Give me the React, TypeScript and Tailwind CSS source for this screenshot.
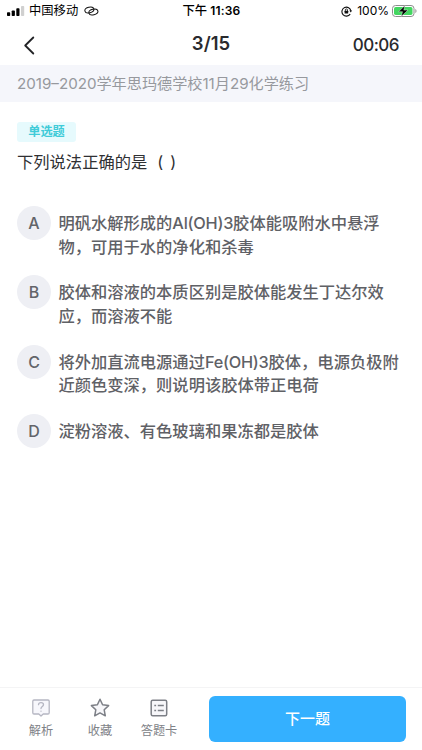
import React from 'react';

const options = [
  { key: 'A', lines: [['明矾水解形成的', 'Al(OH)3', '胶体能吸附水中悬浮'], ['物，可用于水的净化和杀毒']] },
  { key: 'B', lines: [['胶体和溶液的本质区别是胶体能发生丁达尔效'], ['应，而溶液不能']] },
  { key: 'C', lines: [['将外加直流电源通过', 'Fe(OH)3', '胶体，电源负极附'], ['近颜色变深，则说明该胶体带正电荷']] },
  { key: 'D', lines: [['淀粉溶液、有色玻璃和果冻都是胶体']] },
];

function StatusBar() {
  return (
    <div className="grid h-[22px] grid-cols-3 items-center pr-[5px] pl-[7px] text-[12px] leading-[22px] text-black">
      <div className="flex items-center">
        <svg width="18" height="10" viewBox="0 0 18 10">
          <rect x="0" y="6.2" width="3.2" height="3.8" rx=".8" />
          <rect x="4.7" y="4.5" width="3.2" height="5.5" rx=".8" />
          <rect x="9.3" y="2.3" width="3.2" height="7.7" rx=".8" />
          <rect x="14" y="0" width="3.2" height="10" rx=".8" fill="#d0d0d0" />
        </svg>
        <span className="ml-[4px] text-[12.3px]">中国移动</span>
        <svg className="ml-[6px]" width="15" height="10" viewBox="0 0 15 10" fill="none" stroke="#111" strokeWidth="1" strokeLinecap="round">
          <ellipse cx="5.400" cy="4" rx="4.600" ry="2.800" transform="rotate(-14 5.400 4)" />
          <ellipse cx="9.400" cy="6" rx="4.600" ry="2.800" transform="rotate(-14 9.400 6)" />
        </svg>
      </div>
      <div className="flex justify-center gap-[3px] pr-[1px] font-semibold">
        <span className="text-[12.300px] font-medium">下午</span>
        <span className="tracking-[0.2px]">11:36</span>
      </div>
      <div className="flex items-center justify-end">
        <svg width="11" height="11" viewBox="0 0 11 11" fill="none" stroke="#111" strokeWidth="1.1">
          <path d="M9.2 8.1A4.5 4.5 0 1 1 9.9 5" />
          <path d="M8.3 4.600h2.700L9.800 6.600z" fill="#111" stroke="none" />
          <rect x="3.6" y="4.8" width="3.6" height="2.8" rx=".4" fill="#111" stroke="none" />
          <path d="M4.3 5V4a1.1 1.1 0 0 1 2.2 0v1" strokeWidth=".8" />
        </svg>
        <span className="mr-[3px] ml-[5px] text-[12px]">100%</span>
        <svg width="25" height="12" viewBox="0 0 25 12">
          <rect x=".5" y=".5" width="21.5" height="11" rx="3" fill="#fff" stroke="#8d8d8d" />
          <rect x="2" y="2" width="18.5" height="8" rx="1.7" fill="#43d660" />
          <path d="M23.3 4v4c.8-.3 1.2-1.1 1.2-2s-.4-1.700-1.200-2z" fill="#999" />
          <path d="M12.900.6 6.500 6.700h4L9.300 11.400l6.700-6.300h-4.200z" fill="#000" stroke="#fff" strokeWidth=".4" />
        </svg>
      </div>
    </div>
  );
}

function Tool({ label, className, children }: { label: string; className: string; children: React.ReactNode }) {
  return (
    <div className={'flex flex-col items-center ' + className}>
      {children}
      <span className="mt-[5px] text-[12.2px] leading-[16px] whitespace-nowrap text-[#808287]">{label}</span>
    </div>
  );
}

export default function App() {
  return (
    <div className="flex h-[750px] w-[422px] flex-col overflow-hidden bg-white font-[Inter,'Noto_Sans_CJK_SC',sans-serif]">
      <StatusBar />
      <header className="grid h-[43px] grid-cols-3 items-center pr-[23px] pl-[23px] text-[#292a2e]">
        <svg className="mt-[3px]" width="13" height="19" viewBox="0 0 13 19" fill="none" stroke="#222326" strokeWidth="1.8" strokeLinecap="round" strokeLinejoin="round">
          <path d="M10.300 1.500 2.200 9.500l8.100 8" />
        </svg>
        <div className="pt-px text-center text-[18.500px] font-semibold">3/15</div>
        <div className="pt-[4px] text-right text-[17px] font-medium tracking-[-0.5px]">00:06</div>
      </header>
      <div className="flex h-[37px] items-center bg-[#f5f6fb] pt-px pl-[17px] text-[15.150px] whitespace-nowrap text-[#97999e]">
        2019–2020学年思玛德学校11月29化学练习
      </div>

      <main className="flex-1 pt-[20px] pl-[17px]">
        <div className="flex h-[20px] w-[59px] items-center justify-center rounded-[3px] bg-[#e6fafd] text-[12.2px] font-bold text-[#40cbd8]">
          单选题
        </div>
        <div className="mt-[8px] flex h-[24px] items-center text-[16.300px] text-[#2f3033]">
          <span>下列说法正确的是</span>
          <span className="ml-[10px]">(</span>
          <span className="ml-[7px]">)</span>
        </div>
        <div className="mt-[32px] flex flex-col gap-[12.500px]">
          {options.map((o) => (
            <div key={o.key} className="flex min-h-[56.800px] items-start">
              <div className="flex h-[34px] w-[34px] shrink-0 items-center justify-center rounded-full bg-[#eeeff4] text-[16px] font-medium text-[#626469]">
                {o.key}
              </div>
              <div className="ml-[7.500px] pt-[6px] text-[16.280px] leading-[23.500px] font-medium whitespace-nowrap text-[#5f6166]">
                {o.lines.map((line) => (
                  <div key={line[0]}>
                    {line.map((part, i) => (
                      <span key={part} className={i === 1 ? 'tracking-[-0.25px]' : ''}>{part}</span>
                    ))}
                  </div>
                ))}
              </div>
            </div>
          ))}
        </div>
      </main>

      <footer className="flex h-[63px] shrink-0 border-t border-[#f4f4f5]">
        <div className="flex w-[209px] pt-[10px]">
          <Tool label="解析" className="ml-[21px] w-[40px]">
            <svg width="20" height="20" viewBox="0 0 20 20" fill="none" stroke="#b5b6c2" strokeWidth="1.300" strokeLinejoin="round" strokeLinecap="round">
              <path d="M3 2h14a1.200 1.200 0 0 1 1.200 1.200v11.600A1.200 1.200 0 0 1 17 16h-4.800L10 18l-2.200-2H3a1.200 1.200 0 0 1-1.200-1.200V3.200A1.200 1.200 0 0 1 3 2z" fill="#f7f7fc" />
              <path d="M7.500 6.700C7.600 5.300 8.600 4.600 10 4.600s2.500.8 2.500 2.100c0 1.800-2.500 1.900-2.500 3.900M10 13.100v.1" />
            </svg>
          </Tool>
          <Tool label="收藏" className="ml-[19px] w-[40px]">
            <svg width="20" height="20" viewBox="0 0 20 20" fill="none" stroke="#7c7f86" strokeWidth="1.500" strokeLinejoin="round">
              <path d="m10 1.300 2.600 5.500 6 .8-4.400 4.200 1.100 6L10 14.900l-5.300 2.900 1.100-6L1.400 7.600l6-.8z" fill="#f7f7fa" />
            </svg>
          </Tool>
          <Tool label="答题卡" className="ml-[19px] w-[40px]">
            <svg width="20" height="20" viewBox="0 0 20 20" fill="none" stroke="#7c7f86" strokeWidth="1.500">
              <rect x="2.200" y="2.200" width="15.500" height="15.500" rx="1.500" fill="#f7f7fa" />
              <path d="M5.300 7.500h1.800M5.300 12.500h1.800M8.800 7.500h6M8.800 12.500h6" />
            </svg>
          </Tool>
        </div>
        <button className="mt-[8px] h-[46px] w-[197px] rounded-[6px] bg-[#34b0ff] text-[15px] font-medium text-white">下一题</button>
      </footer>
    </div>
  );
}
